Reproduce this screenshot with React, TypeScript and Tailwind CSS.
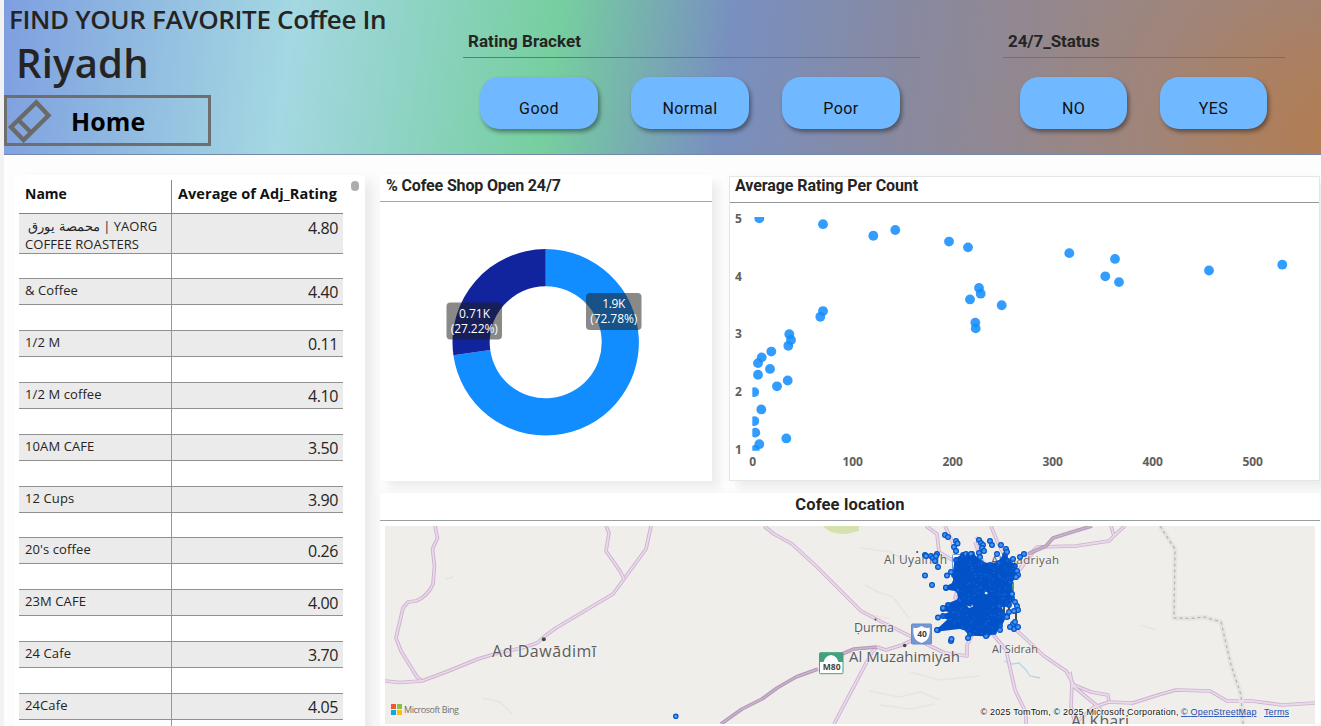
import React from 'react';

const OPEN = "font-['Open_Sans','Noto_Sans',sans-serif]";
const DIN = "font-['Roboto','Open_Sans',sans-serif]";

const rows: [string, string][] = [
  ['& Coffee', '4.40'],
  ['1/2 M', '0.11'],
  ['1/2 M coffee', '4.10'],
  ['10AM CAFE', '3.50'],
  ['12 Cups', '3.90'],
  ["20's coffee", '0.26'],
  ['23M CAFE', '4.00'],
  ['24 Cafe', '3.70'],
  ['24Cafe', '4.05'],
];

const points: [number, number][] = [
  [6.6, 5], [70.3, 4.9], [120.6, 4.7], [142.6, 4.8], [196.3, 4.6], [215.3, 4.5], [226.3, 3.8],
  [228, 3.7], [217.3, 3.6], [249, 3.5], [222.6, 3.2], [223, 3.1], [70.3, 3.4], [67.6, 3.3],
  [36.6, 3], [38.3, 2.9], [35.6, 2.8], [18.6, 2.7], [9, 2.6], [5.3, 2.5], [17.3, 2.4], [5.3, 2.3],
  [35, 2.2], [24.3, 2.1], [1.6, 2], [8.6, 1.7], [1.6, 1.5], [2.6, 1.3], [33.6, 1.2], [6.6, 1.1],
  [2, 1], [316.6, 4.4], [362.3, 4.3], [352.6, 4], [366.3, 3.9], [456.3, 4.1], [529.6, 4.2],
];

const cluster: [number, number][] = [
  [956, 560], [963, 555], [972, 554], [981, 563], [990, 565], [999, 563], [1005, 555], [1008, 561],
  [1015, 566], [1017, 575], [1010, 582], [1012, 598], [1009, 605], [999, 606], [1005, 616],
  [1000, 626], [994, 632], [987, 635], [970, 634], [963, 627], [938, 630], [950, 619], [943, 616],
  [954, 612], [943, 609], [948, 605], [960, 600], [958, 590], [946, 588], [955, 583], [954, 575],
];

const outliers: [number, number][] = [
  [945, 535], [948, 537], [956, 541], [957.5, 543.5], [954, 547], [956, 551], [979, 540], [981, 543],
  [983, 545], [982, 548], [984, 551], [990, 541], [992, 545], [1001, 545], [1006, 549], [1007, 552],
  [979, 553], [980, 557], [966, 554], [971, 554], [997, 554], [1024, 554], [1020, 557], [1013, 559],
  [925, 555], [926, 556], [931, 556], [933, 558], [937, 554], [936, 556], [935, 561], [938, 567],
  [925, 575.5], [932, 585], [947, 575.5], [951, 572], [946, 587.5], [938, 617.5], [937, 630],
  [951, 641], [951.5, 639], [968, 638], [986, 636], [1017, 571], [1018, 575], [1016, 577],
  [1015, 602], [1017, 606], [1018, 610], [1014, 611], [1009, 612], [1007, 617], [1013, 624],
  [1014, 629], [1018, 627], [1010, 627], [1015, 622], [1012, 594], [943, 608], [1000, 630],
];

function inside(x: number, y: number) {
  let hit = false;
  for (let i = 0, j = cluster.length - 1; i < cluster.length; j = i++) {
    const [xi, yi] = cluster[i];
    const [xj, yj] = cluster[j];
    if (yi > y !== yj > y && x < ((xj - xi) * (y - yi)) / (yj - yi) + xi) hit = !hit;
  }
  return hit;
}

function makeShops() {
  let seed = 7;
  const rnd = () => {
    seed = (seed * 16807) % 2147483647;
    return seed / 2147483647;
  };
  const out: [number, number, boolean][] = [];
  while (out.length < 620) {
    const x = 937 + rnd() * 82;
    const y = 552 + rnd() * 86;
    if (inside(x, y)) out.push([x, y, rnd() > 0.75]);
  }
  return out;
}
const shops = makeShops();

function Chip({ label, wide }: { label: string; wide?: boolean }) {
  return (
    <button
      className={`${DIN} ${wide ? 'w-[118px]' : 'w-[107px]'} flex h-[52px] items-center justify-center rounded-[19px] bg-[#70b8ff] pt-[11px] text-[16px] tracking-[0.4px] text-[#111] shadow-[2px_3px_4px_rgba(0,0,0,0.4)]`}
    >
      {label}
    </button>
  );
}

function Header() {
  return (
    <header className="flex h-[155px] border-b border-[#7488a8] bg-[radial-gradient(circle_at_1330px_140px,#b27d52_0px,rgba(176,126,88,0.8)_90px,rgba(172,128,98,0.35)_190px,rgba(170,130,105,0)_300px),linear-gradient(97.5deg,#7f9ee0_0px,#84a8e0_45px,#a4d8e2_290px,#8bd2bf_430px,#76cf9f_552px,#7890c0_724px,#8889a0_900px,#96878a_1060px,#9a8786_1200px,#948688_1330px)]">
      <div className="w-[459px]">
        <h1 className={`${OPEN} mt-[1px] h-[37px] pl-[5px] text-[26px] leading-[36px] font-[650] tracking-[-0.35px] whitespace-nowrap text-[#252423]`}>
          FIND YOUR FAVORITE Coffee In
        </h1>
        <div className={`${OPEN} h-[57px] pl-[12px] text-[40px] leading-[50px] font-[650] tracking-[0.2px] whitespace-nowrap text-[#252423]`}>
          Riyadh
        </div>
        <button className="flex h-[51px] w-[207px] items-center border-[3px] border-[#6e6e6e]">
          <svg className="h-[46px] w-[45px] shrink-0" viewBox="7 97 45 46" fill="none" stroke="#6a6a6a" strokeWidth="4.4">
            <path d="M11 126 36.3 101.5 48.5 114.5 23.5 139Z" />
            <path d="M18.5 119 31 131.5" />
          </svg>
          <span className={`${OPEN} ml-[19px] pt-[2px] text-[25px] leading-none font-bold tracking-[0.1px] text-black`}>Home</span>
        </button>
      </div>
      <section className="w-[457px] pt-[26px]">
        <h2 className={`${DIN} h-[32px] border-b border-[#6d7478] pl-[5px] text-[17px] leading-[31px] font-bold tracking-[0.05px] text-[#252423]`}>Rating Bracket</h2>
        <div className="mt-[19px] flex gap-[33px] pl-[17px]">
          <Chip label="Good" wide />
          <Chip label="Normal" wide />
          <Chip label="Poor" wide />
        </div>
      </section>
      <section className="ml-[83px] w-[282px] pt-[26px]">
        <h2 className={`${DIN} h-[32px] border-b border-[#7c6f6a] pl-[5px] text-[17px] leading-[31px] font-bold tracking-[-0.1px] text-[#252423]`}>24/7_Status</h2>
        <div className="mt-[19px] flex gap-[33px] pl-[17px]">
          <Chip label="NO" />
          <Chip label="YES" />
        </div>
      </section>
    </header>
  );
}

function RatingTable() {
  return (
    <section className="flex h-[560px] w-[351px] bg-white pt-[5px] pl-[5px] shadow-[8px_6px_12px_rgba(0,0,0,0.08)]">
      <div className={`${OPEN} w-[324px] text-[#252423]`}>
        <div className="flex h-[33px] text-[14px] font-bold text-[#111]">
          <div className="w-[153px] border-r border-[#8a8a8a] pl-[6px] leading-[27px]">Name</div>
          <div className="w-[171px] pr-[6px] text-right text-[14.5px] leading-[27px] tracking-[0.08px] whitespace-nowrap">Average of Adj_Rating</div>
        </div>
        <div className="h-px bg-[#2b98ff]" />
        <div className="flex h-[40px] border-b border-b-[#8f8f8f] bg-[#ebebeb]">
          <div className="w-[153px] border-r border-[#6aa3dc] pt-[4px] pl-[6px] text-[13px] leading-[17.5px] tracking-[0.1px] whitespace-nowrap">
            &nbsp;محمصة يورق | YAORG
            <br />
            COFFEE ROASTERS
          </div>
          <div className="w-[171px] pr-[5px] text-right text-[16px] leading-[29px] tracking-[-0.4px]">4.80</div>
        </div>
        <div className="h-[24.3px] w-[153px] border-r border-[#6aa3dc]" />
        {rows.map(([name, rating]) => (
          <div key={name} className="h-[51.82px]">
            <div className="flex h-[27px] border-y border-[#909090] bg-[#ebebeb]">
              <div className="w-[153px] border-r border-[#6aa3dc] pl-[6px] text-[13px] leading-[23px] tracking-[0.1px]">{name}</div>
              <div className="w-[171px] pr-[5px] text-right text-[16px] leading-[27px] tracking-[-0.4px]">{rating}</div>
            </div>
            <div className="h-[24.82px] w-[153px] border-r border-[#6aa3dc]" />
          </div>
        ))}
      </div>
      <div className="mt-[1px] ml-[8px] h-[10px] w-[8px] rounded-full bg-[#adadad]" />
    </section>
  );
}

function Donut() {
  const cx = 545.7;
  const cy = 342.3;
  const at = (r: number, f: number) => `${cx + r * Math.sin(f * 2 * Math.PI)} ${cy - r * Math.cos(f * 2 * Math.PI)}`;
  const arc = (a: number, b: number) => {
    const big = b - a > 0.5 ? 1 : 0;
    return `M${at(93.2, a)}A93.2 93.2 0 ${big} 1 ${at(93.2, b)}L${at(56, b)}A56 56 0 ${big} 0 ${at(56, a)}Z`;
  };
  return (
    <section className="h-[306px] w-[332px] bg-white shadow-[8px_8px_8px_rgba(0,0,0,0.06),0_0_8px_rgba(0,0,0,0.02)]">
      <h2 className={`${DIN} h-[27px] border-b border-[#a8a8a8] pl-[6px] text-[16px] leading-[22px] font-bold tracking-[-0.15px] text-[#252423]`}>% Cofee Shop Open 24/7</h2>
      <svg className="block h-[279px] w-[332px] font-['Open_Sans',sans-serif]" viewBox="380 202 332 279" fontSize="12" fill="#fff" textAnchor="middle">
        <path d={arc(0, 0.7278)} fill="#118dff" />
        <path d={arc(0.7278, 1)} fill="#12239e" />
        <rect x="446.5" y="302.5" width="55.5" height="37" rx="4" fill="#1c1c1a" fillOpacity="0.52" />
        <rect x="586" y="293" width="55.5" height="37" rx="4" fill="#1c1c1a" fillOpacity="0.52" />
        <text x="474.5" y="318" textLength="31">0.71K</text>
        <text x="474.3" y="333" textLength="47">(27.22%)</text>
        <text x="613.8" y="308" textLength="23">1.9K</text>
        <text x="613.8" y="323.3" textLength="47">(72.78%)</text>
      </svg>
    </section>
  );
}

function Scatter() {
  return (
    <section className="mt-[1px] h-[305px] w-[591px] border border-[#e6e6e6] bg-white shadow-[8px_8px_8px_rgba(0,0,0,0.06),0_0_8px_rgba(0,0,0,0.02)]">
      <h2 className={`${DIN} h-[26px] border-b border-[#959595] pl-[5px] text-[16px] leading-[18px] font-bold tracking-[-0.08px] text-[#252423]`}>Average Rating Per Count</h2>
      <svg className="block h-[276px] w-[589px] font-['Open_Sans',sans-serif]" viewBox="730 203 589 276" fontSize="12" fontWeight="700" fill="#605e5c">
        <clipPath id="plot">
          <rect x="752.3" y="217" width="560" height="233.7" />
        </clipPath>
        {[5, 4, 3, 2, 1].map((n) => (
          <text key={n} x="735" y={222.8 + (5 - n) * 57.8}>{n}</text>
        ))}
        {[0, 100, 200, 300, 400, 500].map((n) => (
          <text key={n} x={752.7 + n} y="466" textAnchor="middle">{n}</text>
        ))}
        <g clipPath="url(#plot)" fill="#118dff" fillOpacity="0.86">
          {points.map(([x, y], i) => (
            <circle key={i} cx={752.7 + x} cy={218.4 + (5 - y) * 57.9} r="4.9" />
          ))}
        </g>
      </svg>
    </section>
  );
}

const roads = [
  'M435 526 437.5 538 432.5 549 434.5 566 433 584Q428 596 416 601L408 602 403 608 396 638 401 651 417 677 422 681',
  'M385 681 400 682.5 422 681 446 672 478 659 498 653 522 648 537 643 545 636 556 628 613 594 624 579 646 549 651 526',
  'M606 526 609 533 606 551 620 571 624 579',
  'M764 526 774 534 792 544 817 567 838 588 861 611 876 619 896 629 910 636 930 646 945 653 967 656 967 645 973 634',
  'M834 724 872 652 877 647',
  'M877 647 886 650 902 645 915 639',
  'M926 526 937 534 939 552 954 561 962 575 955 598 962 603',
  'M945 526 952 541 956 555',
  'M975 542 980 556 985 566M976 537 983 546M991 526 997 541 1003 553',
  'M1018 572 1028 556 1037 547 1076 546 1109 541 1117 533 1125 526M1111 526 1114 536M1016 575 1037 547',
  'M1013 627 1027 640 1044 656 1066 671 1074 685 1091 692 1108 695 1109 702 1094 707 1074 724M1070 672 1072 685 1071 706 1075 724M1072 685 1096 705 1105 714',
  'M991 632 1006 650 1015 690 1026 713 1026 724',
  'M1108 702 1133 703 1158 695 1176 690 1210 691 1227 701 1252 701 1282 705 1315 703',
];

const darkRoads = [
  'M721 724 742 709 762 699 777 688 796 677 818 669M842 654 854 649 877 647',
  'M1028 554 1046 546 1053 538 1072 532 1092 526',
];

function LocationMap() {
  return (
    <section className="mt-[12px] h-[240px] w-[940px] bg-white shadow-[0_0_8px_rgba(0,0,0,0.04)]">
      <h2 className={`${DIN} h-[28px] border-b border-[#9a9e9e] text-center text-[16.5px] leading-[23px] font-bold tracking-[0.15px] text-[#252423]`}>Cofee location</h2>
      <svg className="mt-[5px] ml-[5px] block h-[198px] w-[930px] font-['Open_Sans',sans-serif]" viewBox="385 526 930 198">
        <rect x="385" y="526" width="930" height="198" fill="#efeeea" />
        <path d="M823 526Q831 535 846 534L859 531V526Z" fill="#d3e2ae" />
        <path d="M445 579 453 577M865 585 878 592 893 597 901 608 910 619M872 615 890 619M869 691 900 697 920 692 940 700M880 705 910 709 935 704M1140 625 1156 630M482 698 500 702 512 714M860 548 890 552 905 560M910 672 940 680 980 676" fill="none" stroke="#e6e5e0" strokeWidth="1.5" />
        <path d="M1004 661 1012 664 1019 663 1026 670 1030 676 1040 678" fill="none" stroke="#b5d6ea" strokeWidth="1.3" />
        <g fill="none" strokeLinejoin="round">
          {roads.map((d) => (
            <g key={d}>
              <path d={d} stroke="#cfb0d3" strokeWidth="3.6" />
              <path d={d} stroke="#e8dae9" strokeWidth="1.8" />
            </g>
          ))}
          {darkRoads.map((d) => (
            <g key={d}>
              <path d={d} stroke="#b398b8" strokeWidth="3.6" />
              <path d={d} stroke="#c9b5cc" strokeWidth="1.4" />
            </g>
          ))}
          <path d="M1160 526 1175 549 1174 618 1190 618.5 1204 617 1221 622 1231 665 1241 695 1243 724" stroke="#e6e5e1" strokeWidth="5" />
          <path d="M1160 526 1175 549 1174 618 1190 618.5 1204 617 1221 622 1231 665 1241 695 1243 724" stroke="#b7b6b3" strokeWidth="1.3" strokeDasharray="3 3" />
        </g>
        <g fill="#444">
          <circle cx="543.8" cy="639.3" r="2" />
          <circle cx="904.7" cy="645.5" r="1.8" />
          <circle cx="875.5" cy="619.5" r="1" />
          <circle cx="917.2" cy="552" r="1" />
        </g>
        <g fill="#5c5c5c" stroke="#f4f3f0" strokeWidth="2" strokeOpacity="0.6" paintOrder="stroke">
          <text x="492" y="657" fontSize="16" textLength="104">Ad Dawādimī</text>
          <text x="884" y="563.5" fontSize="12" textLength="63">Al Uyainah</text>
          <text x="991" y="563.5" fontSize="11.5" textLength="68">Al Jnadriyah</text>
          <text x="854" y="632" fontSize="12.5" textLength="40">Ḍurma</text>
          <text x="849" y="662" fontSize="15" textLength="111">Al Muzahimiyah</text>
          <text x="992" y="652.5" fontSize="11" textLength="46">Al Sidrah</text>
          <text x="1071" y="727" fontSize="16" textLength="58">Al Kharj</text>
        </g>
        <rect x="952.5" y="554.5" width="18" height="18" rx="1" fill="#fff" stroke="#6b9be0" />
        <path d="M1009 582H1014V598H1011Z" fill="#4fa36b" />
        <path d="M1004 606V619M1009 606V619M1016 612V620" stroke="#3c3c3c" strokeWidth="1.8" />
        <rect x="911.5" y="624" width="20" height="20" rx="1" fill="#7598d3" stroke="#648bd0" />
        <path d="M913.5 627.5Q917.5 629 921.5 626 925.5 629 929.5 627.5C930.5 636 928 641 921.5 643 915 641 912.5 636 913.5 627.5Z" fill="#fff" />
        <text x="922" y="637.3" fontSize="8.5" fontWeight="700" textAnchor="middle" fill="#444">40</text>
        <rect x="819.5" y="652.7" width="23.5" height="21" rx="1" fill="#fff" stroke="#43a081" />
        <path d="M819.5 652.7H843V662H838.5Q837 656 831 655 825 656 823.5 662H819.5Z" fill="#43a081" />
        <text x="831.7" y="669.7" fontSize="8.5" fontWeight="700" textAnchor="middle" fill="#444" textLength="18">M80</text>
        <path d={`M${cluster.map((p) => p.join(' ')).join('L')}Z`} fill="#0352c8" stroke="#0352c8" strokeWidth="3" strokeLinejoin="round" />
        <g stroke="#0352c8" strokeWidth="1.2">
          {cluster.map(([x, y], i) => (
            <circle key={i} cx={x} cy={y} r="2.3" fill="#1467dc" />
          ))}
          {outliers.map(([x, y], i) => (
            <circle key={i} cx={x} cy={y} r="2.4" fill="#4597f2" />
          ))}
          <circle cx="675.8" cy="716.3" r="2.2" fill="#4ba0fb" />
        </g>
        {shops.map(([x, y, lit], i) => (
          <circle key={i} cx={x} cy={y} r={lit ? 0.75 : 1.6} fill={lit ? '#1768dc' : '#0352c8'} />
        ))}
        <path d="M985.5 591.5 988 593 986.5 594.5 984.5 593.5ZM967 605.5 971 607 972 604.5 973 606.5 969 608Z" fill="#eef2f8" />
        <path d="M391 704h5v5h-5z" fill="#f1592a" />
        <path d="M397 704h5v5h-5z" fill="#84c441" />
        <path d="M391 710h5v5h-5z" fill="#0ba9e8" />
        <path d="M397 710h5v5h-5z" fill="#fdbd10" />
        <text x="404" y="712.7" fontSize="9" fill="#707070" textLength="55">Microsoft Bing</text>
        <g className="font-['Liberation_Sans',sans-serif]" fontSize="9">
          <text x="980.5" y="715" fill="#111" stroke="#fff" strokeOpacity="0.6" strokeWidth="1.5" paintOrder="stroke" textLength="198">© 2025 TomTom, © 2025 Microsoft Corporation,</text>
          <text x="1181" y="715" fill="#1a4cb5" textLength="75.5" textDecoration="underline">© OpenStreetMap</text>
          <text x="1264" y="715" fill="#1a4cb5" textLength="25" textDecoration="underline">Terms</text>
        </g>
      </svg>
    </section>
  );
}

export default function App() {
  return (
    <div className="h-[726px] w-[1321px] overflow-hidden bg-[#f2f2f2] pl-[4px]">
      <div className="h-full bg-[#fdfdfd]">
        <Header />
        <main className="flex gap-[15px] pt-[20px] pl-[10px]">
          <RatingTable />
          <div className="w-[941px]">
            <div className="flex gap-[17px]">
              <Donut />
              <Scatter />
            </div>
            <LocationMap />
          </div>
        </main>
      </div>
    </div>
  );
}
